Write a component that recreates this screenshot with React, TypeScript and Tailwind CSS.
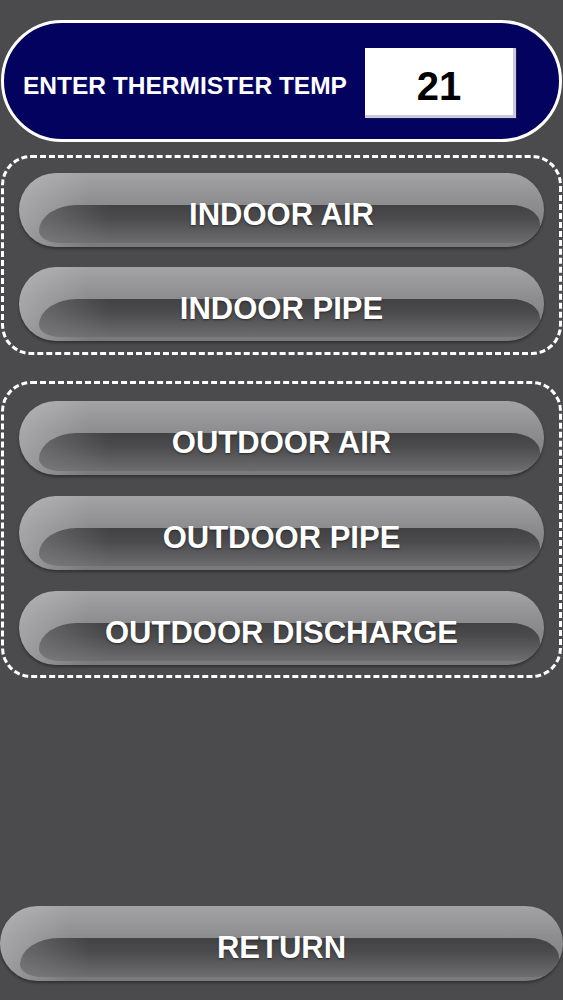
import React from "react";

const indoor = ["INDOOR AIR", "INDOOR PIPE"];
const outdoor = ["OUTDOOR AIR", "OUTDOOR PIPE", "OUTDOOR DISCHARGE"];

function GlossButton({ label, tall = false }: { label: string; tall?: boolean }) {
  return (
    <button
      className={`relative isolate w-full ${tall ? "h-[75px]" : "h-[74px]"} flex items-center justify-center pt-[10px] rounded-full overflow-hidden bg-[linear-gradient(to_bottom,#a3a3a5,#8e8e90_40%,#79797b)] shadow-[0_2px_3px_rgba(0,0,0,0.35)]`}
    >
      {/* light left cap */}
      <span className="absolute -z-10 inset-y-0 left-0 w-[70px] rounded-l-full bg-[linear-gradient(to_right,rgba(200,200,202,0.45),transparent)]" />
      {/* dark inner glass */}
      <span className="absolute -z-10 left-[20px] right-[4px] top-[43%] bottom-[4px] rounded-[44px_34px_30px_24px/30px_22px_14px_14px] bg-[linear-gradient(to_right,rgba(130,130,132,0.55),transparent_70px),linear-gradient(to_bottom,#424143,#4b4a4c_35%,#6d6d6f)]" />
      <span className="text-white font-bold text-[31px] font-['Liberation_Sans',Arial,sans-serif] [text-shadow:0_1px_2px_rgba(0,0,0,0.5)]">
        {label}
      </span>
    </button>
  );
}

function Group({ items, className }: { items: string[]; className: string }) {
  return (
    <div className={`mx-[1px] rounded-[30px] border-[3px] border-dashed border-white px-[15px] flex flex-col ${className}`}>
      {items.map((item) => (
        <GlossButton key={item} label={item} />
      ))}
    </div>
  );
}

export default function App() {
  return (
    <div className="h-[1000px] bg-[#4b4a4c] flex flex-col overflow-hidden font-['Liberation_Sans',Arial,sans-serif]">
      {/* Header */}
      <div className="mt-[20px] mx-[1px] h-[122px] rounded-full border-[3px] border-white bg-[#03035f] flex items-center pl-[19px] pr-[43px]">
        <span className="pt-[10px] text-white font-bold text-[24.5px] whitespace-nowrap">ENTER THERMISTER TEMP</span>
        <div className="mt-[4px] ml-auto w-[151px] h-[70px] pt-[8px] bg-white border-r-[3px] border-b-[3px] border-[#c9c9e2] shadow-[1px_1px_0_#1a1a4a] flex items-center justify-center">
          <span className="text-black font-bold text-[40px] leading-none">21</span>
        </div>
      </div>

      <Group items={indoor} className="mt-[13px] pt-[15px] pb-[11px] gap-[20px]" />
      <Group items={outdoor} className="mt-[26px] pt-[17px] pb-[10px] gap-[21px]" />

      <div className="mt-auto mb-[19px]">
        <GlossButton label="RETURN" tall />
      </div>
    </div>
  );
}
